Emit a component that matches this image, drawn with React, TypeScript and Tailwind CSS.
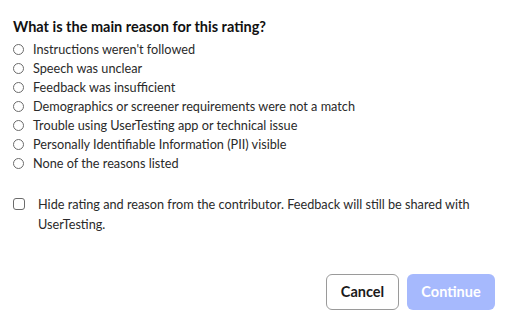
import React, { useState } from 'react';

const reasons = [
  "Instructions weren't followed",
  'Speech was unclear',
  'Feedback was insufficient',
  'Demographics or screener requirements were not a match',
  'Trouble using UserTesting app or technical issue',
  'Personally Identifiable Information (PII) visible',
  'None of the reasons listed',
];

export default function App() {
  const [selected, setSelected] = useState<number | null>(null);
  const [hidden, setHidden] = useState(false);

  return (
    <div className="w-[512px] h-[325px] bg-white text-[#1a1a1a] font-['Lato',sans-serif] flex flex-col pl-[13px] pr-[17px] pt-[17px] pb-[15px]">
      <h2 className="text-[14.5px] font-bold leading-[20px] text-[#111]">What is the main reason for this rating?</h2>

      {/* Reason list */}
      <div className="mt-[3px] flex flex-col">
        {reasons.map((r, i) => (
          <label key={r} className="flex items-center h-[19px] cursor-pointer" onClick={() => setSelected(i)}>
            <span className="w-[11px] h-[11px] rounded-full border border-[#6b6b6b] flex items-center justify-center">
              {selected === i && <span className="w-[5px] h-[5px] rounded-full bg-[#1a1a1a]" />}
            </span>
            <span className="ml-[9px] text-[12.7px] leading-[19px] text-[#2a2a2a]">{r}</span>
          </label>
        ))}
      </div>

      {/* Hide from contributor */}
      <label className="mt-[21px] flex items-start cursor-pointer" onClick={() => setHidden(!hidden)}>
        <span className="mt-[4px] w-[12px] h-[12px] rounded-[3px] border border-[#6b6b6b] bg-white shrink-0" />
        <span className="ml-[13px] text-[12.7px] leading-[20px] text-[#2a2a2a]">
          Hide rating and reason from the contributor. Feedback will still be shared with UserTesting.
        </span>
      </label>

      <div className="mt-auto flex justify-end gap-[8px]">
        <button className="w-[73px] h-[36px] rounded-[6px] border border-[#9a9a9a] bg-white text-[14.5px] font-bold text-[#1a1a1a]">
          Cancel
        </button>
        <button className="w-[88px] h-[36px] rounded-[6px] bg-[#a6b9fd] text-[14.5px] font-bold text-white">
          Continue
        </button>
      </div>
    </div>
  );
}
